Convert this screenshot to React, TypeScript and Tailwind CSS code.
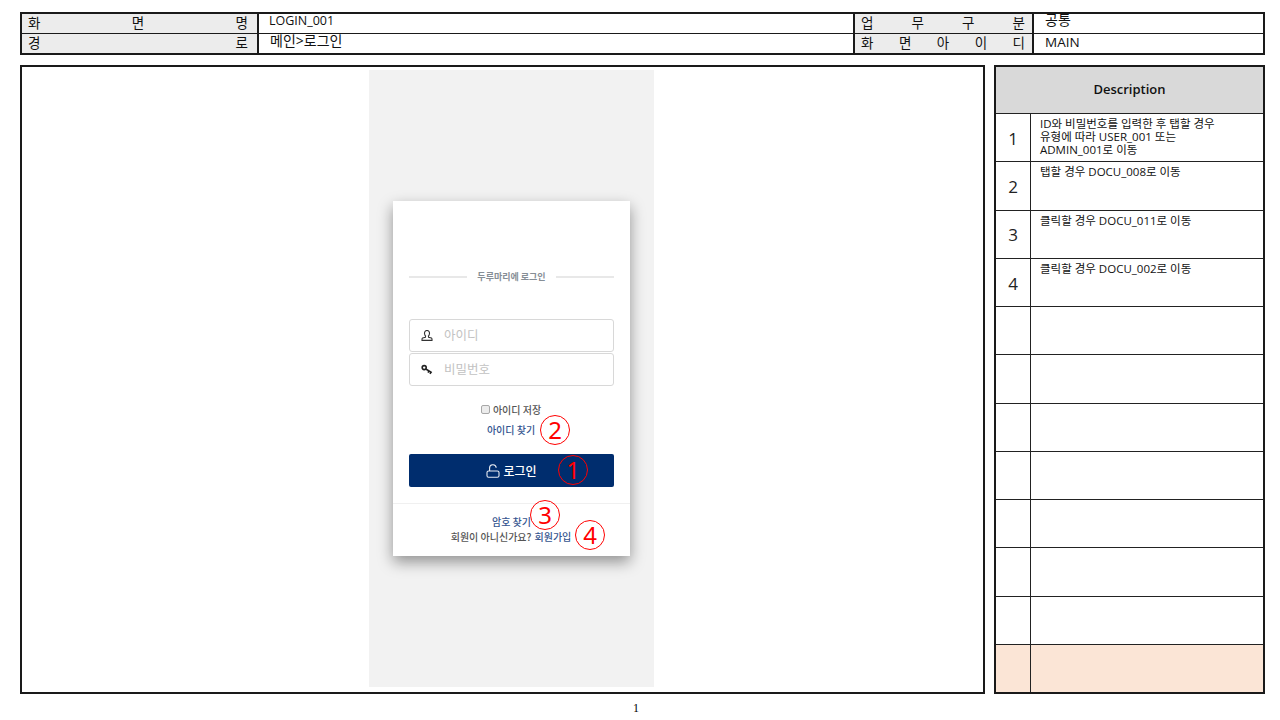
const FONT = "font-['Open_Sans','Noto_Sans_CJK_KR',sans-serif]";

function Spread({ chars, className = "" }: { chars: string[]; className?: string }) {
  return (
    <div className={`flex justify-between items-start bg-[#ececec] pl-[6px] text-[13.5px] leading-[18px] text-[#111] ${className}`}>
      {chars.map((c, i) => (
        <span key={i}>{c}</span>
      ))}
    </div>
  );
}

function Circle({ n, className }: { n: string; className: string }) {
  return (
    <div className={`absolute w-[30px] h-[30px] rounded-full border border-[#ff0000] flex items-center justify-center text-[#ff0000] text-[24px] leading-none font-['Noto_Sans',sans-serif] ${className}`}>
      <span className="block h-[22px] leading-[22px]">{n}</span>
    </div>
  );
}

function Header() {
  return (
    <div className="ml-5 mt-3 border-2 border-[#1a1a1a] grid grid-cols-[237px_594px_181px_1fr] grid-rows-[19px_19px] gap-y-[1px] bg-[#1a1a1a] h-[43px] w-[1245px] text-[#111]">
      <Spread chars={["화", "면", "명"]} className="border-r-2 border-[#1a1a1a] pr-[9px]" />
      <div className="bg-white pl-[10px] text-[12.5px] leading-[14px]">LOGIN_001</div>
      <Spread chars={["업", "무", "구", "분"]} className="border-x-2 border-[#1a1a1a] pr-[7px]" />
      <div className="bg-white pl-[11px] text-[14px] leading-[12px]">공통</div>
      <Spread chars={["경", "로"]} className="border-r-2 border-[#1a1a1a] pr-[9px]" />
      <div className="bg-white pl-[11px] text-[14px] leading-[13px]">메인&gt;로그인</div>
      <Spread chars={["화", "면", "아", "이", "디"]} className="border-x-2 border-[#1a1a1a] pr-[7px]" />
      <div className="bg-white pl-[11px] text-[13.5px] leading-[17px]">MAIN</div>
    </div>
  );
}

function UserIcon() {
  return (
    <svg width="12" height="12" viewBox="0 0 12 12" fill="none" stroke="#333" strokeWidth="1.1">
      <path d="M3.6 4 A2.5 2.8 0 1 1 8.4 4 Q8.2 5.4 7.4 6 L7.6 7.2 L10.4 8 Q11 8.4 11 9.2 V10.4 H1 V9.2 Q1 8.4 1.6 8 L4.4 7.2 L4.6 6 Q3.8 5.4 3.6 4 Z" />
    </svg>
  );
}

function KeyIcon() {
  return (
    <svg width="12" height="12" viewBox="0 0 12 12" fill="none" stroke="#222" strokeWidth="1.6">
      <circle cx="3.2" cy="3.6" r="2" />
      <path d="M4.8 5 L10.8 8.6 M8 6.9 L7 8.6 M10 8.2 L9 9.8" />
    </svg>
  );
}

function LockIcon() {
  return (
    <svg width="14" height="14" viewBox="0 0 14 14" fill="none" stroke="#e8ecf3" strokeWidth="1.1">
      <rect x="1" y="7" width="12" height="6.3" rx="1.6" />
      <path d="M3.6 7 V4.4 A3.3 3.3 0 0 1 10.2 3.8" />
    </svg>
  );
}

function LoginCard() {
  return (
    <div className="ml-6 mt-[131px] w-[237px] h-[355px] bg-white shadow-[0_6px_14px_rgba(0,0,0,0.4)] flex flex-col font-['Noto_Sans_CJK_KR',sans-serif]">
      <div className="mt-[70px] mx-4 flex items-center gap-2.5 h-3">
        <div className="flex-1 h-[1.5px] bg-[#e8e8e8]" />
        <span className="text-[9px] font-semibold text-[#868e96] leading-3">두루마리에 로그인</span>
        <div className="flex-1 h-[1.5px] bg-[#e8e8e8]" />
      </div>
      <div className="mt-[36px] mx-4 flex flex-col gap-px">
        <div className="h-[33px] border border-[#d8d8d8] rounded-[3px] flex items-center pl-[11px] gap-[11px]">
          <UserIcon />
          <span className="text-[12.5px] text-[#c2c2c2]">아이디</span>
        </div>
        <div className="h-[33px] border border-[#d8d8d8] rounded-[3px] flex items-center pl-[11px] gap-[11px]">
          <KeyIcon />
          <span className="text-[12.5px] text-[#c2c2c2]">비밀번호</span>
        </div>
      </div>
      <div className="mt-[15px] flex items-center justify-center gap-[3px] h-4 pr-[1px]">
        <div className="w-[9px] h-[9px] rounded-[2px] border border-[#a8a8a8] bg-[#ececec]" />
        <span className="text-[10px] font-medium text-[#555]">아이디 저장</span>
      </div>
      <div className="mt-[4px] h-4 flex items-center justify-center pr-[1px] text-[10px] font-medium text-[#34558f]">아이디 찾기</div>
      <div className="mt-[17px] mx-4 h-[33px] rounded-[2px] bg-[#002d6e] flex items-center justify-center gap-[3px] text-white text-[12px] font-medium">
        <LockIcon />
        <span>로그인</span>
      </div>
      <div className="mt-4 h-px bg-[#f0f0f0]" />
      <div className="mt-[9px] h-4 flex items-center justify-center text-[10px] font-medium text-[#34558f]">암호 찾기</div>
      <div className="mt-px h-[14px] flex items-center justify-center pr-[1px] text-[10px] leading-[12px] font-medium text-[#555] gap-[3px]">
        <span>회원이 아니신가요?</span>
        <span className="text-[#34558f]">회원가입</span>
      </div>
    </div>
  );
}

function Stage() {
  return (
    <div className="relative w-[965px] shrink-0 border-2 border-[#1a1a1a] bg-white">
      <div className="ml-[347px] mt-[3px] w-[285px] h-[617px] bg-[#f2f2f2] flex flex-col">
        <LoginCard />
      </div>
      <Circle n="2" className="left-[518px] top-[348px]" />
      <Circle n="1" className="left-[536px] top-[388px]" />
      <Circle n="3" className="left-[508px] top-[433px]" />
      <Circle n="4" className="left-[553px] top-[453px]" />
    </div>
  );
}

const ROWS: { n: string; lines: string[] }[] = [
  { n: "1", lines: ["ID와 비밀번호를 입력한 후 탭할 경우", "유형에 따라 USER_001 또는", "ADMIN_001로 이동"] },
  { n: "2", lines: ["탭할 경우 DOCU_008로 이동"] },
  { n: "3", lines: ["클릭할 경우 DOCU_011로 이동"] },
  { n: "4", lines: ["클릭할 경우 DOCU_002로 이동"] },
  ...Array.from({ length: 7 }, () => ({ n: "", lines: [] as string[] })),
];

function Description() {
  return (
    <div className="w-[271px] shrink-0 border-2 border-[#1a1a1a] flex flex-col bg-white">
      <div className="h-[46px] bg-[#d9d9d9] flex items-center justify-center text-[13px] font-semibold text-[#111]">Description</div>
      {ROWS.map((r, i) => (
        <div key={i} className="flex-1 flex border-t border-[#222]">
          <div className="w-[35px] border-r border-[#222] flex items-center justify-center text-[17px] text-[#222] pt-[2px]">{r.n}</div>
          <div className="flex-1 pl-[9px] pt-[3px] text-[11.5px] leading-[13px] text-[#111]">
            {r.lines.map((l) => (
              <div key={l}>{l}</div>
            ))}
          </div>
        </div>
      ))}
      <div className="flex-1 flex border-t border-[#222] bg-[#fbe5d6]">
        <div className="w-[35px] border-r border-[#222]" />
        <div className="flex-1" />
      </div>
    </div>
  );
}

export default function App() {
  return (
    <div className={`w-[1280px] h-[720px] bg-white overflow-hidden flex flex-col ${FONT}`}>
      <Header />
      <div className="ml-5 mt-[10px] flex gap-[9px] h-[629px] w-[1245px]">
        <Stage />
        <Description />
      </div>
      <div className="mt-[7px] w-[1272px] text-center text-[12px] leading-[14px] text-black font-['Liberation_Serif',serif]">1</div>
    </div>
  );
}
